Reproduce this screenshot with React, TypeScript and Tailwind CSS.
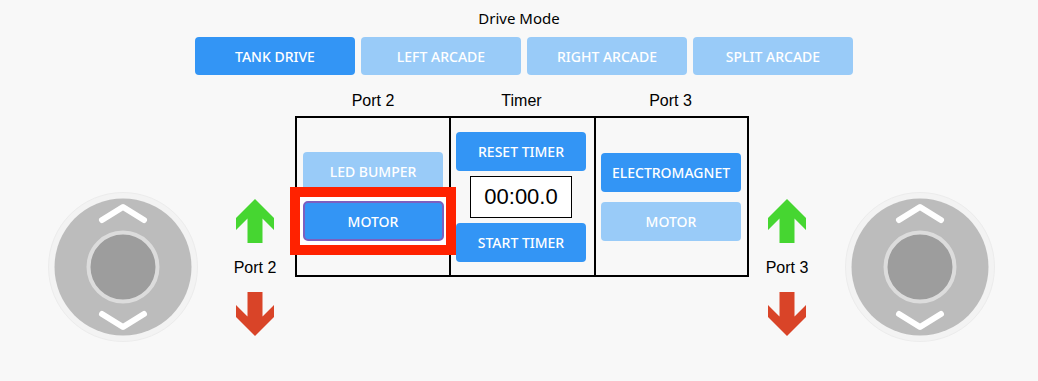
import React from "react";

const BLUE = "bg-[#3395f5]";

function Arrow({ up, color }: { up: boolean; color: string }) {
  return (
    <svg width="38" height="44" viewBox="0 0 38 44" className={up ? "" : "rotate-180"}>
      <polygon
        points="19,0 38,19 38,31 26.5,19.5 26.5,44 11.5,44 11.5,19.5 0,31 0,19"
        fill={color}
      />
    </svg>
  );
}

function Joystick() {
  return (
    <svg width="150" height="150" viewBox="0 0 150 150">
      <circle cx="75" cy="75" r="74.5" fill="#f3f3f3" stroke="#ececec" strokeWidth="1" />
      <circle cx="75" cy="75" r="68.5" fill="#bcbcbc" />
      <circle cx="75" cy="75" r="34.5" fill="#9d9d9d" stroke="#dcdcdc" strokeWidth="4" />
      <polyline
        points="54,28 75,15 96,28"
        fill="none"
        stroke="#ffffff"
        strokeWidth="6"
        strokeLinecap="round"
        strokeLinejoin="round"
      />
      <polyline
        points="54,122 75,135 96,122"
        fill="none"
        stroke="#ffffff"
        strokeWidth="6"
        strokeLinecap="round"
        strokeLinejoin="round"
      />
    </svg>
  );
}

function SideControls({ label }: { label: string }) {
  return (
    <div className="w-[42px] flex flex-col items-center">
      <Arrow up color="#46d631" />
      <div className="mt-[15px] h-[20px] leading-[20px] text-[16px] text-black font-['Liberation_Sans',Arial,sans-serif] whitespace-nowrap">
        {label}
      </div>
      <div className="mt-[14px]">
        <Arrow up={false} color="#d94428" />
      </div>
    </div>
  );
}

function Btn({ children, light }: { children: React.ReactNode; light?: boolean }) {
  return (
    <div
      className={`w-[140px] h-[39px] rounded-[4px] flex items-center justify-center text-white text-[14px] font-medium ${
        light ? "bg-[#99cbf8]" : BLUE
      }`}
    >
      {children}
    </div>
  );
}

export default function App() {
  return (
    <div className="w-[1038px] h-[381px] bg-[#f8f8f8] font-['Noto_Sans',sans-serif] overflow-hidden">
      <div className="pt-[8px] h-[28px] text-center text-[15px] leading-[20px] text-black">Drive Mode</div>
      <div className="mt-[9px] flex gap-[6px] pl-[195px]">
        <div className={`w-[160px] h-[38px] rounded-[4px] ${BLUE} text-white text-[14px] font-medium flex items-center justify-center`}>
          TANK DRIVE
        </div>
        <div className="w-[160px] h-[38px] rounded-[4px] bg-[#99cbf8] text-white text-[14px] font-medium flex items-center justify-center">
          LEFT ARCADE
        </div>
        <div className="w-[160px] h-[38px] rounded-[4px] bg-[#99cbf8] text-white text-[14px] font-medium flex items-center justify-center">
          RIGHT ARCADE
        </div>
        <div className="w-[160px] h-[38px] rounded-[4px] bg-[#99cbf8] text-white text-[14px] font-medium flex items-center justify-center">
          SPLIT ARCADE
        </div>
      </div>

      <div className="flex items-start">
        <div className="ml-[48px] mt-[117px]">
          <Joystick />
        </div>
        <div className="ml-[36px] mt-[124px]">
          <SideControls label="Port 2" />
        </div>

        <div className="ml-[19px] mt-[16px] w-[454px]">
          <div className="flex h-[20px] leading-[20px] text-[16px] text-black font-['Liberation_Sans',Arial,sans-serif] px-[2px]">
            <div className="w-[152px] text-center">Port 2</div>
            <div className="w-[145px] text-center">Timer</div>
            <div className="w-[153px] text-center">Port 3</div>
          </div>
          <div className="mt-[5px] h-[161px] border-2 border-black flex">
            <div className="w-[152px] flex flex-col items-center justify-center gap-[10px]">
              <Btn light>LED BUMPER</Btn>
              <div className="relative">
                <div className="absolute -left-[13px] -right-[12px] -top-[14px] -bottom-[14px] border-[10px] border-[#ff2200] bg-white" />
                <div className="relative w-[141px] h-[40px] rounded-[5px] bg-[#3395f5] border-2 border-[#7c5fbf] flex items-center justify-center text-white text-[14px] font-medium">
                  MOTOR
                </div>
              </div>
            </div>
            <div className="w-[145px] border-l-2 border-black flex flex-col items-center justify-center gap-[5px] pr-[3px]">
              <div className="w-[130px] h-[39px] rounded-[4px] bg-[#3395f5] flex items-center justify-center text-white text-[14px] font-medium">
                RESET TIMER
              </div>
              <div className="w-[102px] h-[42px] border border-black bg-white flex items-center justify-center text-[22px] text-black font-['Liberation_Sans',Arial,sans-serif]">
                00:00.0
              </div>
              <div className="w-[130px] h-[39px] rounded-[4px] bg-[#3395f5] flex items-center justify-center text-white text-[14px] font-medium">
                START TIMER
              </div>
            </div>
            <div className="w-[153px] border-l-2 border-black flex flex-col items-center justify-center gap-[10px] pr-[1px]">
              <Btn>ELECTROMAGNET</Btn>
              <Btn light>MOTOR</Btn>
            </div>
          </div>
        </div>

        <div className="ml-[17px] mt-[124px]">
          <SideControls label="Port 3" />
        </div>
        <div className="ml-[37px] mt-[117px]">
          <Joystick />
        </div>
      </div>
    </div>
  );
}
